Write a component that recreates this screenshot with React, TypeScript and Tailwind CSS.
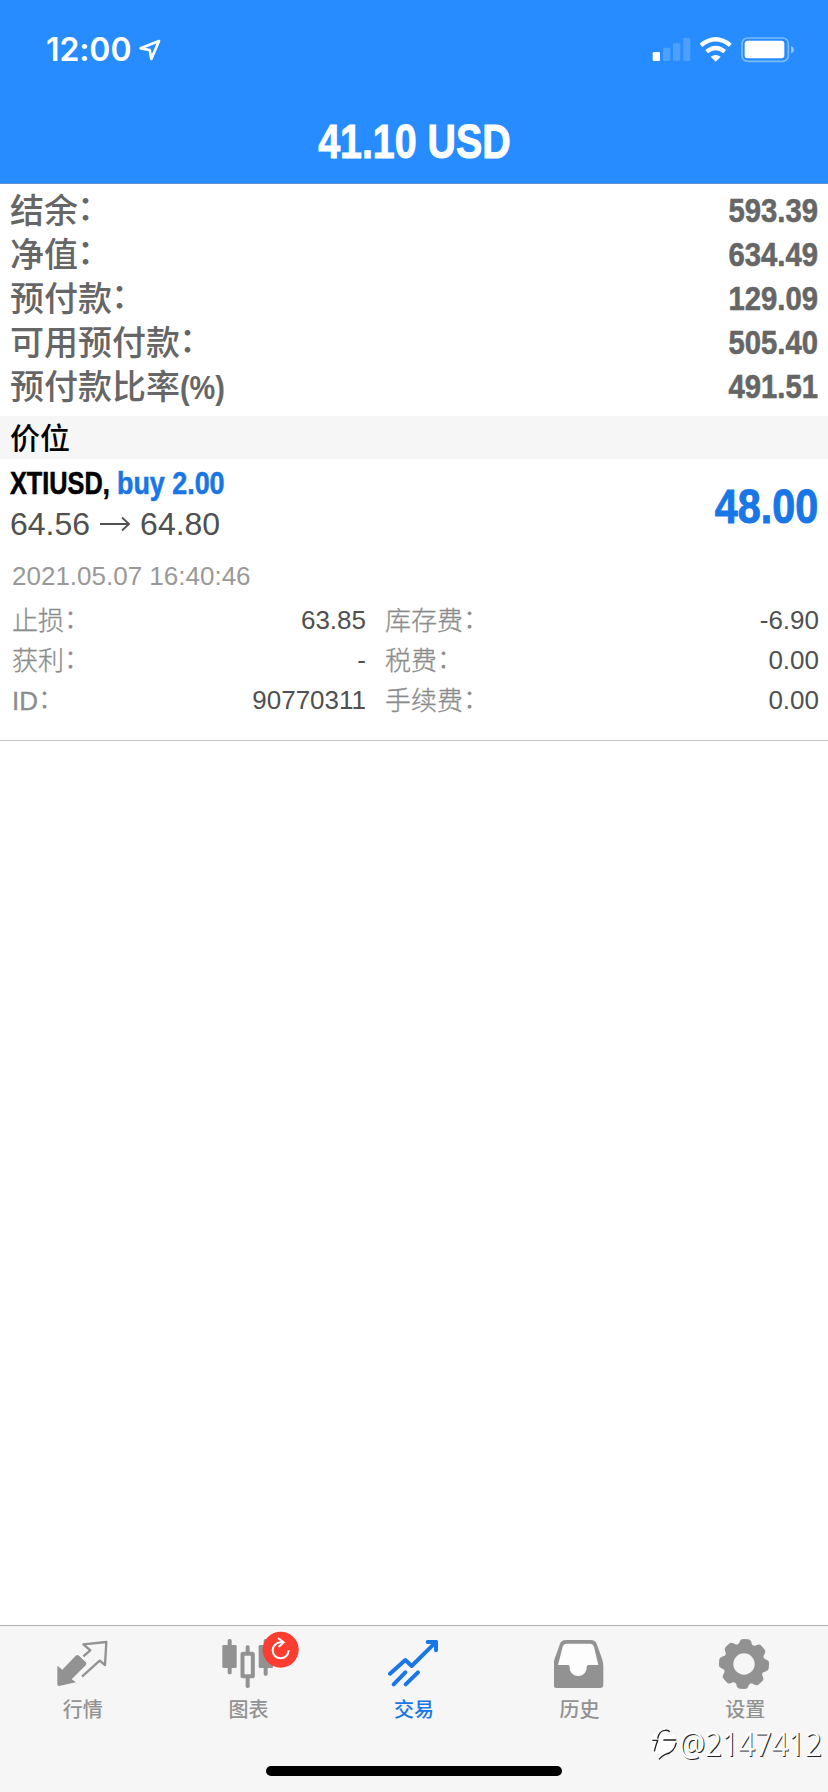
import type { ReactNode } from "react";

const summary = [
  { label: "结余", suffix: "：", value: "593.39" },
  { label: "净值", suffix: "：", value: "634.49" },
  { label: "预付款", suffix: "：", value: "129.09" },
  { label: "可用预付款", suffix: "：", value: "505.40" },
  { label: "预付款比率", suffix: "(%)", value: "491.51" },
];

const details = [
  ["止损", "63.85", "库存费", "-6.90"],
  ["获利", "-", "税费", "0.00"],
  ["ID", "90770311", "手续费", "0.00"],
];

function StatusBar() {
  return (
    <div className="flex h-[98px] items-center justify-between pl-[46px] pr-[34px] pt-[1px]">
      <div className="flex items-center gap-[8px]">
        <span className="w-[85px] whitespace-nowrap font-['Inter',sans-serif] text-[32px] font-semibold leading-[40px] tracking-[-0.1px]">
          12:00
        </span>
        <svg className="h-[22px] w-[22px]" viewBox="415 117 66 66" fill="none" stroke="currentColor" strokeWidth="8" strokeLinejoin="round">
          <path d="M475 123 L420 145 L447 150 L452 177 Z" />
        </svg>
      </div>
      <svg className="h-[27px] w-[142px]" viewBox="714 108 426 81" fill="none">
        <rect x="716" y="156" width="22" height="27" rx="4" fill="#fff" />
        <g fill="#fff" fillOpacity="0.18">
          <rect x="747" y="143" width="22" height="40" rx="4" />
          <rect x="777" y="129" width="22" height="54" rx="4" />
          <rect x="808" y="114" width="21" height="69" rx="4" />
        </g>
        <g stroke="#fff" strokeWidth="13">
          <path d="M861 136 Q905 100 949 136" />
          <path d="M878 155 Q905 133 932 155" />
        </g>
        <path d="M890 170 Q905 160 920 170 L905 185 Z" fill="#fff" />
        <rect x="984" y="114" width="139" height="70" rx="17" stroke="#fff" strokeOpacity="0.4" strokeWidth="5" />
        <rect x="992" y="122" width="119" height="53" rx="9" fill="#fff" />
        <path d="M1131 137 Q1140 141 1140 149 Q1140 157 1131 161 Z" fill="#fff" fillOpacity="0.5" />
      </svg>
    </div>
  );
}

function QuotesIcon() {
  return (
    <svg className="h-[54px] w-[52px]" viewBox="170 84 156 162" fill="none">
      <path d="M171 167 L186 179 L226 137 Q231 133 236 137 L256 156 Q260 161 256 166 L214 208 L227 217 L176 228 Q171 228 171 223 Z" fill="currentColor" />
      <path d="M249 139 L270 121 L249 103 L318 96 L314 165 L298 152 L245 200" stroke="currentColor" strokeWidth="7" strokeLinejoin="round" />
    </svg>
  );
}

function ChartIcon() {
  return (
    <svg className="h-[54px] w-[52px]" viewBox="667 84 156 162" fill="currentColor">
      <rect x="684" y="87" width="12" height="106" rx="5" />
      <rect x="668" y="105" width="43" height="69" rx="4" />
      <rect x="738" y="106" width="12" height="28" rx="5" />
      <rect x="738" y="199" width="12" height="35" rx="5" />
      <rect x="728.5" y="131" width="31" height="68" rx="2" fill="none" stroke="currentColor" strokeWidth="12" />
      <rect x="792" y="87" width="12" height="110" rx="5" />
      <rect x="777" y="105" width="43" height="69" rx="4" />
    </svg>
  );
}

function TradeIcon() {
  return (
    <svg className="h-[54px] w-[52px]" viewBox="174 84 156 162" fill="none" stroke="currentColor" strokeWidth="12" strokeLinecap="round" strokeLinejoin="round">
      <path d="M180 191 L226 150 L245 168 L316 98" />
      <path d="M293 96 H318 V121" />
      <path d="M306 96 L318 96 L318 108 Z" />
      <path d="M226 187 L191 223 M264 187 L227 223" />
    </svg>
  );
}

const trayOpening =
  "M709 101 Q700 101 697 110 L683 165 H713 Q718 165 718 172 C718 207 769 207 769 172 Q769 165 774 165 H804 L791 110 Q788 101 779 101 Z";

function HistoryIcon() {
  return (
    <svg className="h-[54px] w-[52px]" viewBox="671 84 156 162">
      <path
        fill="currentColor"
        d="M707 90 H781 Q795 90 799 101 L815 146 Q819 158 819 170 V225 Q819 234 809 234 H679 Q669 234 669 225 V170 Q669 158 673 146 L689 101 Q693 90 707 90 Z"
      />
      <path fill="#fdfdfd" d={trayOpening} />
    </svg>
  );
}

const teeth = [4, 49, 94, 139, 184, 229, 274, 319];

function SettingsIcon() {
  return (
    <svg className="h-[54px] w-[52px]" viewBox="357 84 156 162" fill="currentColor">
      {teeth.map((angle) => (
        <path
          key={angle}
          transform={`rotate(${angle} 432 162)`}
          d="M402 109 Q413 105 415 94 Q418 87 425 87 H439 Q446 87 449 94 Q451 105 462 109 L444 140 H420 Z"
        />
      ))}
      <circle cx="432" cy="162" r="46" fill="none" stroke="currentColor" strokeWidth="28" />
      <circle cx="432" cy="162" r="32" fill="#f6f6f6" />
    </svg>
  );
}

function Tab({ label, active = false, children }: { label: string; active?: boolean; children: ReactNode }) {
  return (
    <div className={`flex flex-1 flex-col items-center pt-[12px] ${active ? "text-[#1976e6]" : "text-[#929292]"}`}>
      <div className="relative">{children}</div>
      <span className="mt-[3px] text-[20px] font-medium leading-[30px]">{label}</span>
    </div>
  );
}

function DetailLabel({ text }: { text: string }) {
  return (
    <span className="flex pt-px font-light text-[#8c8c8c] [-webkit-text-stroke:0.3px]">
      {text}
      <span className="inline-block -translate-y-[2px]">：</span>
    </span>
  );
}

export default function App() {
  return (
    <div className="relative flex h-[1792px] w-[828px] flex-col overflow-hidden bg-white font-['Liberation_Sans','Noto_Sans_CJK_SC',sans-serif]">
      <header className="flex h-[184px] flex-col border-b border-[#6292cf] bg-[#268cff] text-white">
        <StatusBar />
        <h1 className="flex h-[85px] items-center justify-center pt-[3px] text-[48px] font-bold leading-[82px]">
          <span className="inline-block scale-x-[0.82] [-webkit-text-stroke:1px]">41.10 USD</span>
        </h1>
      </header>

      <section className="flex h-[232px] flex-col pt-[4px] text-[#666]">
        {summary.map((row) => (
          <div key={row.label} className="flex h-[44px] items-center justify-between px-[10px]">
            <span className="flex pt-[2px] text-[34px] font-medium leading-[42px]">
              {row.label}
              {row.suffix === "：" ? (
                <span className="inline-block -translate-x-[1px] -translate-y-[3px]">：</span>
              ) : (
                <span className="inline-block origin-left scale-x-[0.85] font-bold">{row.suffix}</span>
              )}
            </span>
            <span className="inline-block origin-right scale-x-[0.86] text-[34px] font-bold leading-[44px] [-webkit-text-stroke:0.6px]">
              {row.value}
            </span>
          </div>
        ))}
      </section>

      <h2 className="flex h-[43px] items-center bg-[#f6f6f6] pl-[10px] pt-[2px] text-[30px] font-medium leading-[41px] text-black">价位</h2>

      <section className="flex h-[282px] flex-col border-b border-[#c4c4c6]">
        <div className="flex h-[96px] justify-between px-[10px]">
          <div className="flex flex-col pt-[4px]">
            <div className="flex text-[32px] font-bold leading-[40px] [-webkit-text-stroke:0.6px]">
              <span className="w-[107px] whitespace-nowrap">
                <span className="inline-block origin-left scale-x-[0.79] text-black">XTIUSD,</span>
              </span>
              <span className="inline-block origin-left scale-x-[0.84] text-[#1976e6]">buy 2.00</span>
            </div>
            <div className="flex items-center gap-[10px] text-[32px] leading-[42px] text-[#505050]">
              <span>64.56</span>
              <svg className="h-[16px] w-[30px]" viewBox="0 0 30 16" fill="none" stroke="currentColor" strokeWidth="1.8">
                <path d="M0 8 H29 M22 1.5 L29 8 L22 14.5" />
              </svg>
              <span>64.80</span>
            </div>
          </div>
          <span className="inline-block origin-right scale-x-[0.86] pt-[1px] text-[48px] font-bold leading-[94px] text-[#1976e6] [-webkit-text-stroke:1px]">
            48.00
          </span>
        </div>

        <div className="pl-[12px] text-[26px] leading-[42px] text-[#999]">2021.05.07 16:40:46</div>

        <div className="mt-[3px] flex flex-col text-[26px] text-[#505050]">
          {details.map(([leftLabel, leftValue, rightLabel, rightValue]) => (
            <div key={leftLabel} className="flex h-[40px] items-center pl-[12px] pr-[9px] leading-[40px]">
              <DetailLabel text={leftLabel} />
              <span className="ml-auto">{leftValue}</span>
              <div className="ml-[19px] flex w-[434px] justify-between">
                <DetailLabel text={rightLabel} />
                <span>{rightValue}</span>
              </div>
            </div>
          ))}
        </div>
      </section>

      <main className="flex-1" />

      <footer className="flex h-[167px] flex-col border-t border-[#b2b2b2] bg-[#f6f6f6]">
        <nav className="flex h-[140px]">
          <Tab label="行情"><QuotesIcon /></Tab>
          <Tab label="图表">
            <ChartIcon />
            <svg className="absolute left-[40px] top-[-7px] h-[37px] w-[37px]" viewBox="787 64 111 111" fill="none">
              <circle cx="843" cy="120" r="54" fill="#fc3d30" />
              <path d="M850 98 H843 A24 24 0 1 0 867 122" stroke="#fff" strokeWidth="6" />
              <path d="M835 85 L852 98 L837 112" stroke="#fff" strokeWidth="6" />
            </svg>
          </Tab>
          <Tab label="交易" active><TradeIcon /></Tab>
          <Tab label="历史"><HistoryIcon /></Tab>
          <Tab label="设置"><SettingsIcon /></Tab>
        </nav>
        <div className="mx-auto h-[10px] w-[296px] rounded-full bg-black" />
      </footer>

      <div className="absolute left-[651px] top-[1725px] flex h-[40px] items-center">
        <svg className="h-[34px] w-[28px]" viewBox="153 364 84 102" fill="none">
          <path d="M153 396 Q158 372 195 368 Q207 369 202 377 Q214 380 223 386 Q231 392 228 407 Q230 430 207 440 Q194 445 178 457 Q187 446 185 441 Q163 444 160 430 Q152 415 153 396 Z" fill="#fff" />
          <path d="M157 401 H173 Q168 415 163 434 M173 396 Q177 372 195 371 Q206 370 209 376 M190 400 H229 M229 408 Q223 438 196 443 Q187 447 177 458" stroke="#222" strokeWidth="4" />
        </svg>
        <span className="-mt-[3px] inline-block origin-left scale-x-[0.91] whitespace-nowrap font-['Open_Sans','Noto_Sans',sans-serif] text-[32px] font-normal leading-[40px] text-white [text-shadow:1px_1px_0_#222]">
          @2147412
        </span>
      </div>
    </div>
  );
}
